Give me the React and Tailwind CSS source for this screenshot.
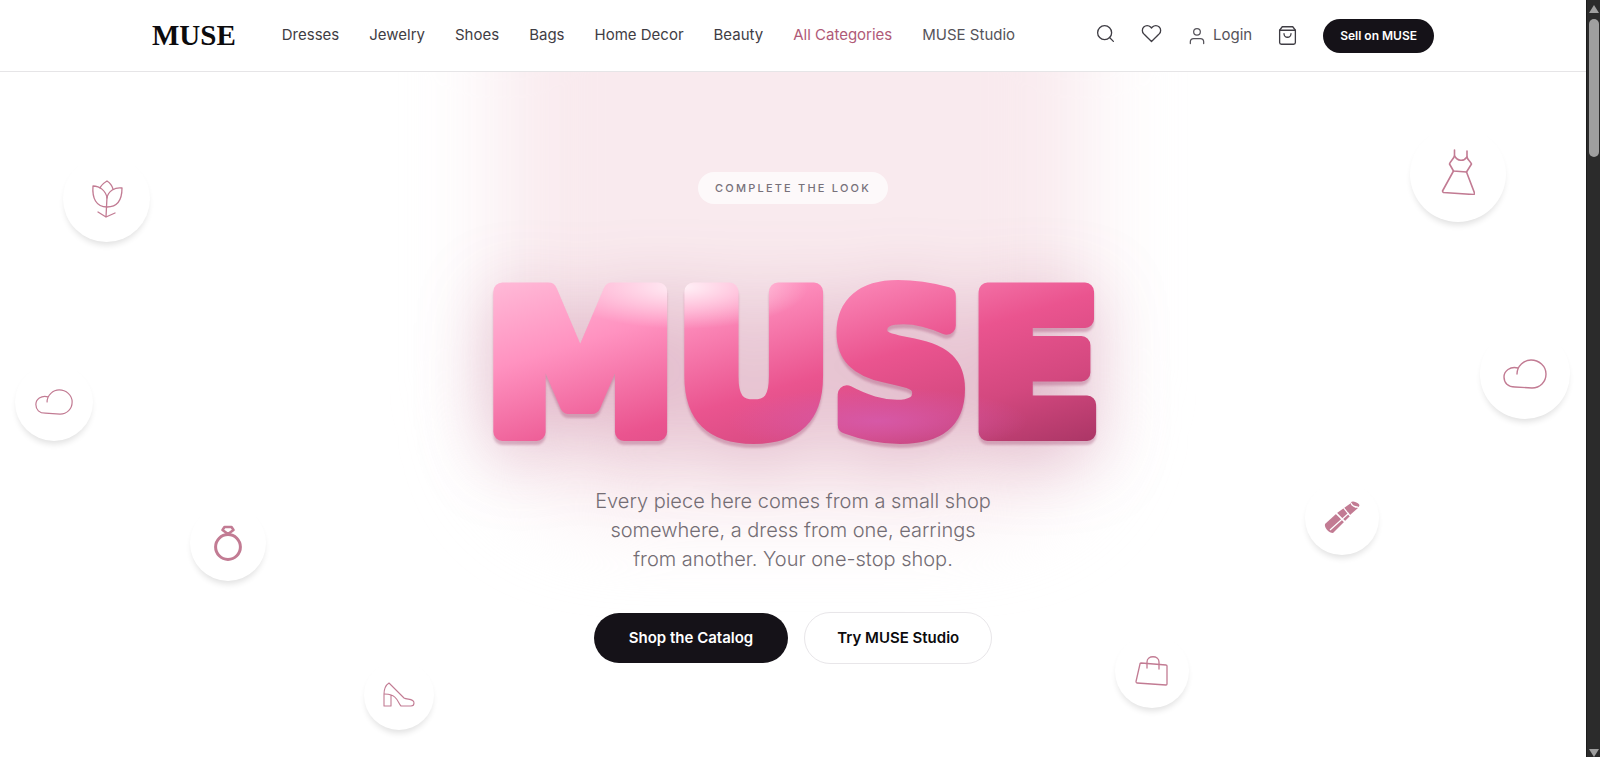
import React from 'react'
import { FiSearch, FiHeart, FiUser, FiShoppingBag } from 'react-icons/fi'

const navLinks = ['Dresses', 'Jewelry', 'Shoes', 'Bags', 'Home Decor', 'Beauty']

function Tulip() {
  return (
    <svg viewBox="0 0 32 40" className="w-8 h-10" fill="none" stroke="currentColor" strokeWidth="1.3" strokeLinejoin="round" strokeLinecap="round">
      <path d="M2 7c7 0 13 5 14 12c1-7 8-11 15-10c0 12-4 19-15 19S1 19 2 7z" />
      <path d="M9 9c1-3 4-5 7-7c3 2 5 4 6 8" />
      <path d="M16 18l-1 20M7 33l8 5l9-4" />
    </svg>
  )
}

function Cloud({ className }) {
  return (
    <svg viewBox="0 0 44 32" className={className} fill="none" stroke="currentColor" strokeWidth="1.4" strokeLinecap="round">
      <path d="M14 16c0-8 7-14 14-14c8 0 15 6 15 14c0 8-6 14-14 14L12 29C5 29 1 25 1 19c0-6 6-11 14-9" />
    </svg>
  )
}

function Ring() {
  return (
    <svg viewBox="0 0 30 36" className="w-[30px] h-9" fill="none" stroke="currentColor" strokeWidth="3" strokeLinejoin="round">
      <circle cx="15" cy="22" r="12.4" />
      <path d="M11.500 2h7l2 3l-5.500 4l-5.500-4z" strokeWidth="2.600" />
    </svg>
  )
}

function Heel() {
  return (
    <svg viewBox="0 0 34 26" className="w-[34px] h-[26px]" fill="none" stroke="currentColor" strokeWidth="1.1" strokeLinejoin="round">
      <path d="M2 24V12C2 7 4 3 7 1l15 15c3 2 10 0 10 5c0 2-1 3-3 3H19c-3-3-4-10-10-11v11z" />
      <path d="M2 12c3 0 5 0 7 1" />
    </svg>
  )
}

function Dress() {
  return (
    <svg viewBox="0 0 34 46" className="w-[34px] h-[46px] mb-1" fill="none" stroke="currentColor" strokeWidth="1.600" strokeLinejoin="round" strokeLinecap="round">
      <path d="M13.500 1v6c-1 3-4 5-5 8l4 7l13 1l5-8c-1-3-4-4-4.500-7V2" />
      <path d="M13.500 7c3 5 9 6 12.500 1" />
      <path d="M12.500 22L1.500 42c0 1 0 1 1 1.500l30 2c1 0 1-1 1-1.500l-8-21" />
    </svg>
  )
}

function Lipstick() {
  return (
    <svg viewBox="0 0 36 34" className="w-9 h-[34px]" fill="currentColor">
      <path d="M1 23l11-10l8 8L9 32C5 32 0 27 1 23z" />
      <path d="M13 12l7-5l6 8l-5 5z" />
      <path d="M20 7l7-5c1 3 4 5 7 5l-8 7z" />
      <ellipse cx="31" cy="3.500" rx="4.500" ry="2.500" transform="rotate(20 31 3.500)" />
      <path d="M6 29L25 12M12 12l9 9M19 6l7 9M27 2c1 3 4 4 7 4" fill="none" stroke="white" strokeWidth="1.200" />
    </svg>
  )
}

function Tote() {
  return (
    <svg viewBox="0 0 34 32" className="w-[34px] h-8" fill="none" stroke="currentColor" strokeWidth="1.300" strokeLinejoin="round" strokeLinecap="round">
      <path d="M6 8l25 2c1 0 1 0 1 1v18c0 1 0 1-1 1L2 28c-1 0-1-1-1-1.500L5 9c0-1 0-1 1-1z" />
      <path d="M12 13V7c0-7 12-7 12 0v7" />
    </svg>
  )
}

// Decorations floating around the hero
const floats = [
  { id: 'tulip', box: 'left-[63px] top-[83px] size-[87px]', icon: <Tulip /> },
  { id: 'cloud-left', box: 'left-[15px] top-[291px] size-[78px]', icon: <Cloud className="w-[38px] h-7" /> },
  { id: 'ring', box: 'left-[190px] top-[433px] size-[76px]', icon: <Ring /> },
  { id: 'heel', box: 'left-[364px] top-[588px] size-[70px]', icon: <Heel /> },
  { id: 'dress', box: 'right-[80px] top-[54px] size-[96px]', icon: <Dress /> },
  { id: 'cloud-right', box: 'right-[16px] top-[257px] size-[90px]', icon: <Cloud className="w-11 h-8" /> },
  { id: 'lipstick', box: 'right-[207px] top-[409px] size-[74px]', icon: <Lipstick /> },
  { id: 'tote', box: 'right-[397px] top-[562px] size-[74px]', icon: <Tote /> },
]

function Wordmark() {
  return (
    <svg
      viewBox="0 0 640 200"
      className="w-[640px] h-[200px] overflow-visible [filter:drop-shadow(0_4px_1px_rgba(150,50,95,0.3))_drop-shadow(0_14px_36px_rgba(165,60,110,0.3))]"
    >
      <defs>
        <linearGradient id="candy" gradientUnits="userSpaceOnUse" x1="24" y1="14" x2="117" y2="324">
          <stop offset="0" stopColor="#ffb9d7" />
          <stop offset="0.25" stopColor="#ff92c0" />
          <stop offset="0.56" stopColor="#ea548f" />
          <stop offset="0.78" stopColor="#d3487f" />
          <stop offset="1" stopColor="#ab3666" />
        </linearGradient>
        <radialGradient id="gloss">
          <stop offset="0" stopColor="#fff" stopOpacity="0.85" />
          <stop offset="0.6" stopColor="#fff" stopOpacity="0.35" />
          <stop offset="1" stopColor="#fff" stopOpacity="0" />
        </radialGradient>
        <radialGradient id="berry">
          <stop offset="0" stopColor="#d65cb0" stopOpacity="0.8" />
          <stop offset="1" stopColor="#d65cb0" stopOpacity="0" />
        </radialGradient>
        <pattern id="glaze" patternUnits="userSpaceOnUse" x="-20" y="0" width="680" height="200">
          <g transform="translate(20 0)">
            <rect x="-20" width="680" height="200" fill="url(#candy)" />
            <ellipse cx="210" cy="18" rx="125" ry="42" fill="url(#gloss)" />
            <ellipse cx="405" cy="152" rx="150" ry="34" fill="url(#berry)" />
          </g>
        </pattern>
      </defs>
      <text
        x="320"
        y="163"
        textAnchor="middle"
        fill="url(#glaze)"
        stroke="url(#glaze)"
        strokeWidth="18"
        strokeLinejoin="round"
        className="font-['DejaVu_Sans',sans-serif] font-bold text-[192px]"
      >
        MUSE
      </text>
    </svg>
  )
}

function Header() {
  return (
    <header className="bg-white border-b border-[#e6e5e7]">
      <div className="max-w-[1282px] h-[71px] mx-auto flex items-center">
        <a href="#home" className="font-['Liberation_Serif',serif] font-bold text-[29px] text-[#0c0b0d]">MUSE</a>
        <nav className="ml-[46px] flex items-center gap-[30px] text-[15px] text-[#3f3d44] whitespace-nowrap">
          {navLinks.map(label => (
            <a key={label} href="#shop">{label}</a>
          ))}
          <a href="#categories" className="text-[#b05a78]">All Categories</a>
          <a href="#studio" className="text-[#55535a]">MUSE Studio</a>
        </nav>
        <div className="ml-auto flex items-center gap-[25px] text-[#3f3d44]">
          <button aria-label="Search" className="pb-1"><FiSearch size={21} strokeWidth={1.5} /></button>
          <button aria-label="Wishlist" className="pb-1"><FiHeart size={21} strokeWidth={1.5} /></button>
          <a href="#login" className="flex items-center gap-[6px] text-[15px] text-[#55535a]">
            <FiUser size={20} strokeWidth={1.5} />
            Login
          </a>
          <button aria-label="Cart"><FiShoppingBag size={21} strokeWidth={1.5} /></button>
          <a href="#sell" className="h-[34px] px-[17px] flex items-center rounded-full bg-[#151218] text-white text-xs font-semibold">Sell on MUSE</a>
        </div>
      </div>
    </header>
  )
}

function Hero() {
  return (
    <section className="relative flex-1 overflow-hidden flex flex-col items-center pt-[100px] pb-[92px]">
      <div className="absolute left-1/2 -translate-x-1/2 -top-[150px] w-[590px] h-[590px] rounded-[120px] bg-[#f9eaee] blur-[45px]" />

      {floats.map(item => (
        <div
          key={item.id}
          className={`absolute rounded-full bg-white text-[#c27b93] flex items-center justify-center shadow-[0_5px_6px_-2px_rgba(0,0,0,0.12)] ${item.box}`}
        >
          {item.icon}
        </div>
      ))}

      <p className="relative h-8 px-[17px] flex items-center rounded-2xl bg-white/70 text-[11px] font-medium tracking-[0.2em] text-[#77717a]">
        COMPLETE THE LOOK
      </p>

      <h1 className="relative mt-[65px]">
        <Wordmark />
      </h1>

      <p className="relative mt-[18px] max-w-[400px] text-center text-[20px] leading-[29px] font-light text-[#746d74]">
        Every piece here comes from a small shop somewhere, a dress from one, earrings from another. Your one-stop shop.
      </p>

      <div className="relative mt-[38px] flex items-center gap-4 text-[15px] font-semibold">
        <a href="#catalog" className="h-[50px] px-[35px] flex items-center rounded-full bg-[#151218] text-white">Shop the Catalog</a>
        <a href="#studio" className="h-[52px] px-8 flex items-center rounded-full bg-white border border-[#e8e6e9] text-[#0c0b0d]">Try MUSE Studio</a>
      </div>
    </section>
  )
}

function ScrollRail() {
  return (
    <div aria-hidden="true" className="w-[14px] shrink-0 flex flex-col items-center justify-between bg-[#2b2b2b] border-l border-[#1b1b1b] pt-[5px]">
      <div className="flex flex-col items-center gap-[6px]">
        <svg viewBox="0 0 10 8" className="w-[10px] h-2" fill="#9f9f9f"><path d="M5 0l5 8H0z" /></svg>
        <div className="w-[10px] h-[138px] rounded-full bg-[#9f9f9f]" />
      </div>
      <svg viewBox="0 0 10 8" className="w-[10px] h-2" fill="#9f9f9f"><path d="M5 8l5-8H0z" /></svg>
    </div>
  )
}

export default function App() {
  return (
    <div className="min-h-screen flex bg-white font-['Inter',sans-serif]">
      <div className="flex-1 min-w-0 flex flex-col">
        <Header />
        <Hero />
      </div>
      <ScrollRail />
    </div>
  )
}
